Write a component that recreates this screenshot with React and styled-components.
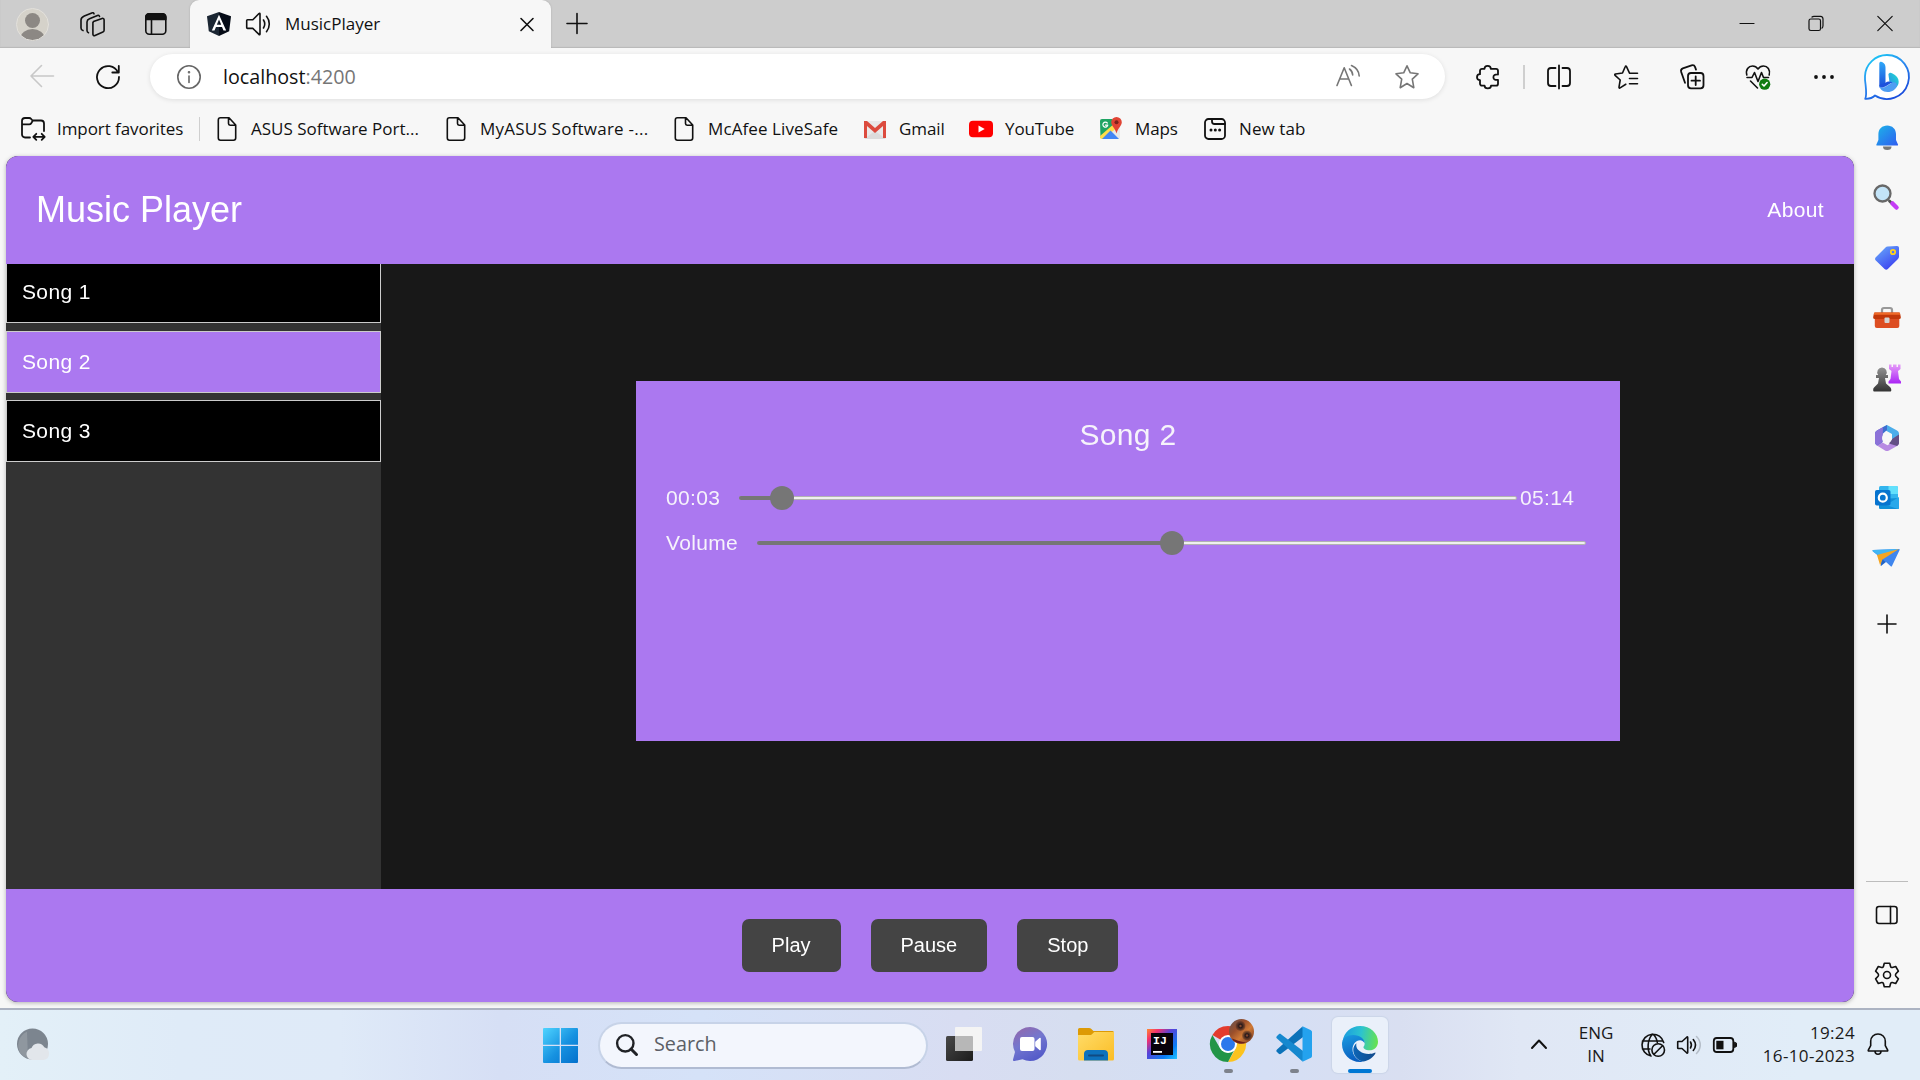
import React from "react";
import styled, { createGlobalStyle } from "styled-components";

const GlobalStyle = createGlobalStyle`
  * { box-sizing: border-box; }
  body { margin: 0; background: #f7f7f7; overflow: hidden; }
`;

const ui = `"Open Sans", "Noto Sans", sans-serif`;
const web = `"Liberation Sans", Arial, sans-serif`;
const violet = "#ab78f0";

const Screen = styled.div`
  display: flex;
  flex-direction: column;
  width: 1920px;
  height: 1080px;
  background: #f7f7f7;
  font-family: ${ui};
  font-size: 17px;
  color: #111;
  overflow: hidden;
`;

const Icon = styled.svg`
  display: block;
  flex: none;
  width: ${(p) => p.$w || 24}px;
  height: ${(p) => p.$h || p.$w || 24}px;
  margin-left: ${(p) => p.$ml || 0}px;
  fill: none;
  stroke: ${(p) => p.$color || "#111"};
  stroke-width: ${(p) => p.$sw || 1.6};
  stroke-linecap: round;
  stroke-linejoin: round;
  overflow: visible;
`;

/* ---------- title bar ---------- */
const TitleBar = styled.header`
  display: flex;
  align-items: center;
  height: 48px;
  flex: none;
  padding-left: 16px;
  background: #cdcdcd;
  box-shadow: inset 0 -1px 1px #b8b8b8;
`;
const Tab = styled.div`
  display: flex;
  align-items: center;
  align-self: stretch;
  width: 361px;
  margin-left: 22px;
  padding: 0 16px 0 17px;
  background: #f7f7f7;
  border-radius: 9px 9px 0 0;
  box-shadow: 0 0 2px #a8a8a8;
  clip-path: inset(0 -3px 0 -3px);
`;
const TabTitle = styled.span`
  flex: 1;
  margin-left: 15px;
  padding-bottom: 2px;
`;
const WindowControls = styled.div`
  display: flex;
  align-items: center;
  gap: 53px;
  margin-left: auto;
  padding-right: 27px;
`;

/* ---------- toolbar ---------- */
const Toolbar = styled.div`
  display: flex;
  align-items: center;
  height: 57px;
  flex: none;
  padding-left: 30px;
`;
const AddressBar = styled.div`
  display: flex;
  align-items: center;
  width: 1295px;
  height: 45px;
  margin-left: 30px;
  padding: 0 26px 0 27px;
  border-radius: 23px;
  background: #fff;
  box-shadow: 0 1px 5px rgba(0, 0, 0, 0.1);
`;
const Url = styled.span`
  flex: 1;
  margin-left: 22px;
  padding-bottom: 1px;
  font-size: 19.7px;
  color: #111;
  & > span { color: #767676; }
`;
const Divider = styled.span`
  width: ${(p) => p.$w || 1}px;
  height: 24px;
  margin-left: ${(p) => p.$ml || 0}px;
  background: #cfcfcf;
`;
const BingSlot = styled.div`
  display: flex;
  margin-left: 28px;
`;

/* ---------- favourites ---------- */
const Favorites = styled.nav`
  display: flex;
  align-items: center;
  height: 48px;
  padding: 0 0 0 21px;
`;
const Favorite = styled.div`
  display: flex;
  align-items: center;
  width: ${(p) => p.$w}px;
  padding-left: ${(p) => p.$pl ?? 15}px;
`;
const FavoriteLabel = styled.span`
  margin-left: 12px;
  padding-bottom: 2px;
  white-space: nowrap;
  letter-spacing: ${(p) => p.$ls || 0}px;
`;

/* ---------- layout ---------- */
const Split = styled.div`
  display: flex;
  flex: none;
  height: 903px;
`;
const LeftColumn = styled.div`
  width: 1854px;
  flex: none;
`;

/* ---------- music app ---------- */
const Page = styled.main`
  display: flex;
  flex-direction: column;
  width: 1848px;
  height: 846px;
  margin: 3px 0 0 6px;
  border-radius: 12px;
  overflow: hidden;
  background: #181818;
  font-family: ${web};
  font-size: 21px;
  letter-spacing: 0.35px;
  color: #fff;
`;
const PageShell = styled.div`
  filter: drop-shadow(0 1px 2px rgba(0, 0, 0, 0.28));
`;
const PageHeader = styled.div`
  display: flex;
  align-items: center;
  justify-content: space-between;
  height: 108px;
  flex: none;
  padding: 0 30px;
  background: ${violet};
`;
const Brand = styled.h1`
  margin: 0;
  font-size: 36px;
  line-height: 42px;
  font-weight: 400;
  letter-spacing: 0;
`;
const Body = styled.div`
  display: flex;
  height: 625px;
  flex: none;
`;
const SongList = styled.div`
  display: flex;
  flex-direction: column;
  width: 375px;
  background: #333;
`;
const Song = styled.div`
  display: flex;
  align-items: center;
  height: ${(p) => (p.$clipped ? 59 : 62)}px;
  margin-bottom: ${(p) => (p.$clipped ? 8 : 7)}px;
  padding: 0 15px ${(p) => (p.$clipped ? 3 : 0)}px;
  border: 1px solid #ccc;
  border-top-width: ${(p) => (p.$clipped ? 0 : 1)}px;
  background: ${(p) => (p.$active ? violet : "#000")};
  line-height: 24px;
`;
const Stage = styled.div`
  display: flex;
  flex: 1;
  padding: 117px 234px 0 255px;
`;
const Card = styled.section`
  display: flex;
  flex-direction: column;
  width: 984px;
  height: 360px;
  padding: 30px 34px 0 30px;
  background: ${violet};
  color: #f6f3fb;
`;
const NowPlaying = styled.h2`
  margin: 0 -4px 0 0;
  height: 48px;
  line-height: 48px;
  text-align: center;
  font-size: 30px;
  font-weight: 400;
`;
const SliderRow = styled.div`
  display: flex;
  align-items: center;
  height: 45px;
  margin-top: ${(p) => p.$mt || 0}px;
`;
const RowLabel = styled.span`
  width: ${(p) => p.$w}px;
  flex: none;
`;
const Track = styled.div`
  position: relative;
  width: ${(p) => p.$w}px;
  height: 4px;
  border: 1px solid #b2b2b2;
  border-radius: 2px;
  background: #efefef;
`;
const Filled = styled.div`
  width: ${(p) => p.$at}px;
  height: 4px;
  margin: -1px;
  border-radius: 2px 0 0 2px;
  background: #767676;
`;
const Thumb = styled.div`
  position: absolute;
  top: -11px;
  left: ${(p) => p.$at - 13}px;
  width: 24px;
  height: 24px;
  border-radius: 50%;
  background: #767676;
`;
const TotalTime = styled.span`
  margin-left: 3px;
`;
const Controls = styled.div`
  display: flex;
  align-items: flex-start;
  justify-content: center;
  gap: 30px;
  flex: 1;
  padding-top: 30px;
  background: ${violet};
`;
const Control = styled.button`
  height: 53px;
  padding: 0 30px;
  border: 0;
  border-radius: 7px;
  background: #444;
  color: #fff;
  font: 20px ${web};
`;

/* ---------- browser side panel ---------- */
const SidePanel = styled.aside`
  display: flex;
  flex-direction: column;
  width: 66px;
  height: 900px;
  align-items: center;
`;
const SideCell = styled.div`
  display: flex;
  align-items: center;
  justify-content: center;
  width: 66px;
  height: ${(p) => p.$h || 60}px;
  padding: ${(p) => p.$pad || "0"};
  flex: none;
`;
const SideRule = styled.div`
  width: 42px;
  height: 1px;
  margin: auto 0 3px;
  background: #bdbdbd;
`;

/* ---------- taskbar ---------- */
const Taskbar = styled.footer`
  display: flex;
  align-items: center;
  height: 72px;
  flex: none;
  border-top: 2px solid #acb3c2;
  padding-left: 16px;
  background: linear-gradient(90deg, #e3f0f8 0, #dfebf8 180px, #dfeaf8 340px, #d6dff5 500px, #d5e2f8 700px, #d8ddf2 960px, #d6def0 1080px, #d4dff6 1230px, #d9dff1 1400px, #e0e7f5 1520px, #e1edf8 1800px);
  color: #1a1a1a;
`;
const StartCell = styled.div`
  display: flex;
  justify-content: center;
  width: 66px;
  margin-left: 477px;
`;
const SearchBox = styled.div`
  display: flex;
  align-items: center;
  width: 330px;
  height: 47px;
  margin-left: 5px;
  padding-left: 16px;
  border: 2px solid #c7d3e8;
  border-bottom-color: #b0bbd2;
  border-radius: 24px;
  background: #f3f6fd;
  color: #5c5f66;
  font-size: 19.8px;
`;
const SearchLabel = styled.span`
  margin-left: 16px;
  padding-bottom: 3px;
`;
const Apps = styled.div`
  display: flex;
  margin-left: 3px;
`;
const AppCell = styled.div`
  display: flex;
  flex-direction: column;
  align-items: center;
  width: 56px;
  height: 56px;
  margin: 0 5px;
  padding-top: 9px;
  border-radius: 6px;
  background: ${(p) => (p.$active ? "#eaf0fa" : "transparent")};
  box-shadow: ${(p) => (p.$active ? "0 0 1px 1px #cbd5e8" : "none")};
`;
const Running = styled.span`
  width: ${(p) => (p.$active ? 24 : 9)}px;
  height: 5px;
  margin-top: 7px;
  border-radius: 3px;
  background: ${(p) => (p.$active ? "#0078d4" : "#7d828c")};
`;
const Tray = styled.div`
  display: flex;
  align-items: center;
  margin-left: auto;
  padding-right: 31px;
`;
const TwoLines = styled.div`
  width: ${(p) => p.$w}px;
  margin-left: ${(p) => p.$ml}px;
  padding-bottom: 2px;
  text-align: ${(p) => p.$align};
  letter-spacing: ${(p) => p.$ls || 0}px;
  line-height: 23px;
  white-space: nowrap;
`;

const Doc = () => (
  <Icon viewBox="0 0 24 24">
    <path d="M5.500.8H14l6.700 7.200V21a2.200 2.200 0 0 1-2.200 2.200h-13A2.200 2.200 0 0 1 3.300 21V3A2.200 2.200 0 0 1 5.500.8zM13.500 1v5.600a1.600 1.600 0 0 0 1.600 1.600h5.400" />
  </Icon>
);

const starPath = "M12 .8l3.300 7 7.700 1-5.700 5.300 1.500 8.600L12 18.500l-6.800 4.200 1.500-8.600L1 8.800l7.700-1z";

function BrowserTop() {
  return (
    <>
      <TitleBar>
        <Icon $w={33} viewBox="0 0 33 33" stroke="none">
          <clipPath id="face"><circle cx="16.500" cy="16.500" r="16" /></clipPath>
          <g clipPath="url(#face)" stroke="none">
            <rect width="33" height="33" fill="#d5d2ca" />
            <circle cx="16.500" cy="12.500" r="7.500" fill="#8c8884" />
            <ellipse cx="16.500" cy="30" rx="12" ry="9" fill="#8c8884" />
          </g>
          <circle cx="16.500" cy="16.500" r="16" stroke="#e3e1dc" strokeWidth="1" />
        </Icon>
        <Icon $ml={31} viewBox="0 0 24 24">
          <path d="M13.500 9.600l8.600-3.200a1.500 1.500 0 0 1 2 1.400v10.400a2 2 0 0 1-1.200 1.800l-7.900 3.600a1.500 1.500 0 0 1-2.100-1.400V11.800a2.400 2.400 0 0 1 .6-2.200z" />
          <path d="M19.500 4.500c-.2-1-1-1.500-2-1.100l-8 3.400C7.800 7.500 7 8.600 7 10v8.500c0 1.200.5 1.800 1.500 2.200M14 1.800c-.4-1-1.200-1.300-2.200-.9L4.300 4C2.200 4.900 1 6 1 8v8c0 1.300.6 2.200 2 2.600" />
        </Icon>
        <Icon $ml={40} viewBox="0 0 24 24">
          <rect x="1.800" y="1.800" width="20" height="20.500" rx="3.500" />
          <path d="M1.800 7.500V5a3.300 3.300 0 0 1 3.400-3.300h13.200A3.300 3.300 0 0 1 21.800 5v2.500zM7.500 8v14" fill="#111" />
        </Icon>
        <Tab>
          <Icon viewBox="0 0 24 24">
            <g stroke="none">
              <path d="M12 0L0 4.200l1.800 15L12 24z" fill="#1b2633" />
              <path d="M12 0l12 4.200-1.800 15L12 24z" fill="#060c17" />
              <path d="M12 2.700L4.800 18.500h2.700L9 14.900h6l1.500 3.600h2.700zm0 4.900l2.200 5.200H9.800z" fill="#fff" fillRule="evenodd" />
            </g>
          </Icon>
          <Icon $ml={15} viewBox="0 0 24 24">
            <path d="M1.500 7.800h5.300L13 1.500c.5-.4 1-.2 1 .4V22c0 .7-.6.900-1 .4l-6.200-6H1.500a.8.8 0 0 1-.8-.8v-7a.8.8 0 0 1 .8-.8zM17.500 8c1.500 2.400 1.500 5.600 0 8M20.500 4.300c3.700 4.500 3.700 11 0 15.400" />
          </Icon>
          <TabTitle>MusicPlayer</TabTitle>
          <Icon $w={16} viewBox="0 0 16 16"><path d="M2 2.500l12 12M14 2.500l-12 12" /></Icon>
        </Tab>
        <Icon $ml={14} viewBox="0 0 24 24"><path d="M2 11.500h20M12 1.500v20" /></Icon>
        <WindowControls>
          <Icon $w={16} $sw={1.2} viewBox="0 0 16 16"><path d="M1 7.500h14" /></Icon>
          <Icon $w={16} $sw={1.2} viewBox="0 0 16 16">
            <rect x="1" y="3" width="11.500" height="11.500" rx="1.800" />
            <path d="M4 1C4.500.5 5 .3 6 .3h6.500A2.700 2.700 0 0 1 15 3V9.500c0 1.500-.3 2-1 2.600" />
          </Icon>
          <Icon $w={16} $sw={1.2} viewBox="0 0 16 16"><path d="M.8.300l14.400 14.400M15.200.300L.8 14.700" /></Icon>
        </WindowControls>
      </TitleBar>
      <Toolbar>
        <Icon $color="#c8c8c8" viewBox="0 0 24 24"><path d="M23.500 11H1M11.500.500L1 11l10.500 10.500" /></Icon>
        <Icon $ml={42} $sw={1.8} viewBox="0 0 24 24"><path d="M22.800 1v6.500h-6.500M22 7.500A11 11 0 1 0 23 12" /></Icon>
        <AddressBar>
          <Icon $color="#666" viewBox="0 0 24 24">
            <circle cx="12" cy="12" r="11.200" /><path d="M12 11v6.500" /><circle cx="12" cy="7.200" r=".5" fill="#666" />
          </Icon>
          <Url>localhost<span>:4200</span></Url>
          <Icon $color="#767676" viewBox="0 0 24 24">
            <path d="M1 20.500L8.200 2.800 15.400 20.500M3.600 14h9.200M13.500 4c2 1.500 3 3.500 3.200 6M15.500.500c4.500 2 7.500 5.500 7.700 10.500" />
          </Icon>
          <Icon $ml={35} $color="#767676" viewBox="0 0 24 24"><path d={starPath} /></Icon>
        </AddressBar>
        <Icon $ml={31} $sw={1.8} viewBox="0 0 24 24">
          <path d="M8.500 3.800C8.500 2 9.800.9 11.600.9s3.200 1.100 3.200 2.900H20a2 2 0 0 1 2 2V9.500c-3.200-.2-4.600.6-4.600 2.700s1.500 2.900 4.600 2.700v3.800a2 2 0 0 1-2 2h-5c0 1.500-1.200 2.600-3.200 2.600s-3.200-1.100-3.200-2.600H6a2 2 0 0 1-2-2v-3.500c-1.900 0-3-1.200-3-3s1.100-3 3-3V5.800a2 2 0 0 1 2-2z" />
        </Icon>
        <Divider $ml={23} $w={2} />
        <Icon $ml={22} $sw={1.8} viewBox="0 0 24 24">
          <path d="M8.500 3H4a3 3 0 0 0-3 3v12a3 3 0 0 0 3 3h4.500M15.500 3H20a3 3 0 0 1 3 3v12a3 3 0 0 1-3 3h-4.500M12 .500v23" />
        </Icon>
        <Icon $ml={43} viewBox="0 0 24 24">
          <path d="M15.500 8.200l-3-6.500c-.3-.8-1-.8-1.300 0L8.500 8 1.500 9c-.8.100-1 .8-.4 1.300L6.200 15l-1.200 7.200c-.1.800.5 1.100 1.100.7l5.700-3.600M15.500 8.300h8M15.500 13.500h8M15.500 18.800h8" />
        </Icon>
        <Icon $ml={42} $sw={1.8} viewBox="0 0 24 24">
          <rect x="8" y="8" width="15.500" height="15.300" rx="3" />
          <path d="M15.700 11.500v8.500M11.500 15.700H20M5 17.800L1.200 7C.7 5.300 1.200 4 2.800 3.400l8.800-3c1.500-.5 2.800 0 3.400 1.500l1 2.700" />
        </Icon>
        <Icon $ml={42} viewBox="0 0 24 24">
          <path d="M.8 10C-.6 4.800 2.500 1 6.500 1c2.500 0 4.300 1.200 5.500 3 1.200-1.800 3-3 5.500-3 4 0 7.100 3.800 5.700 9M1 12.500h5l2.500-5 3.500 9 3.500-9 2 5h5M4.500 16l7 7" />
          <circle cx="18.700" cy="19.200" r="5.600" fill="#107c10" stroke="none" />
          <path d="M16.300 19.300l1.700 1.700 3.100-3.500" stroke="#fff" />
        </Icon>
        <Icon $ml={42} viewBox="0 0 24 24">
          <g fill="#111" stroke="none"><circle cx="4" cy="12" r="1.900" /><circle cx="12" cy="12" r="1.900" /><circle cx="20" cy="12" r="1.900" /></g>
        </Icon>
        <BingSlot>
          <Icon $w={46} viewBox="0 0 46 46">
            <defs>
              <linearGradient id="bing" x1="0" y1="0" x2=".6" y2="1"><stop stopColor="#18d5f5" /><stop offset=".5" stopColor="#2a8cf0" /><stop offset="1" stopColor="#1a4fdd" /></linearGradient>
              <linearGradient id="bingb" x1="0" y1="0" x2="0" y2="1"><stop stopColor="#2fa8f8" /><stop offset="1" stopColor="#1a4ad8" /></linearGradient>
              <linearGradient id="bingc" x1="1" y1="0" x2="0" y2="1"><stop stopColor="#1fe0d0" /><stop offset="1" stopColor="#2c83ea" /></linearGradient>
            </defs>
            <path d="M23 1a22 22 0 1 1-12 40.500C8 44.500 5 45 1.200 44.800 3 41 2 35 1.500 30 .8 26 .9 24 1 22A22 22 0 0 1 23 1z" fill="#fff" stroke="url(#bing)" strokeWidth="1.800" />
            <g stroke="none">
              <path d="M25.500 19c.8-.5 1.500-.3 2.500.2 4.500 2 6.700 5 6.700 8.500 0 3-1.700 5.500-4.200 7 .3-3-.8-4.300-3.500-5.500-1-.5-1.300-.9-1.600-1.800L24.500 21c-.2-.8 0-1.500 1-2z" fill="url(#bingc)" />
              <path d="M15.300 9.500c0-1.800 2-2.200 3.600-1 1.800 1.300 2.600 2.600 2.600 5V30l-4.500 3.500c-1 .8-1.700 0-1.700-1.500z" fill="url(#bingb)" />
              <path d="M15.300 31c1 3 4 3 7 1.200l6-3.700c2-1 4.700 0 4.600 3-1 4-4.500 6.500-9.400 6.500-5 0-8-3-8.200-7z" fill="#4e9df2" />
              <path d="M15.300 31c.6 2.500 3.500 3.200 6.500 1.300l6.500-4c-3-1.300-5-1-6.800.5z" fill="#1d50dc" />
            </g>
          </Icon>
        </BingSlot>
      </Toolbar>
    </>
  );
}

function FavoritesBar() {
  return (
    <Favorites>
      <Favorite $w={178} $pl={0}>
        <Icon $sw={1.8} viewBox="0 0 24 24">
          <path d="M9 20.500H4A3 3 0 0 1 1 17.500V4A3 3 0 0 1 4 1h4.200c.8 0 1.500.4 2 1l1.300 1.500H20a3 3 0 0 1 3 3V14M1.200 7.300h7c.8 0 1.500-.3 2-.9l1.500-2.600M12.500 19.800h11M15.300 16.800l-3 3 3 3M20.700 16.800l3 3-3 3" />
        </Icon>
        <FavoriteLabel $ls={-0.07}>Import favorites</FavoriteLabel>
      </Favorite>
      <Divider />
      <Favorite $w={229}><Doc /><FavoriteLabel>ASUS Software Port...</FavoriteLabel></Favorite>
      <Favorite $w={228}><Doc /><FavoriteLabel $ls={0.23}>MyASUS Software -...</FavoriteLabel></Favorite>
      <Favorite $w={191}><Doc /><FavoriteLabel $ls={0.1}>McAfee LiveSafe</FavoriteLabel></Favorite>
      <Favorite $w={106}>
        <Icon viewBox="0 0 24 24">
          <g stroke="none">
            <path d="M1 4h22v17H1z" fill="#e9e9e9" />
            <path d="M12 14L1 22h22z" fill="#dcdcdc" />
            <path d="M1 4h3l8 7 8-7h3v17h-3V9l-8 7-8-7v12H1z" fill="#dc4b3e" />
          </g>
        </Icon>
        <FavoriteLabel $ls={-0.1}>Gmail</FavoriteLabel>
      </Favorite>
      <Favorite $w={130}>
        <Icon viewBox="0 0 24 24">
          <g stroke="none"><rect y="3.800" width="24" height="16.500" rx="4" fill="#f00" /><path d="M9.500 8.500v7l6.200-3.500z" fill="#fff" /></g>
        </Icon>
        <FavoriteLabel $ls={-0.1}>YouTube</FavoriteLabel>
      </Favorite>
      <Favorite $w={104}>
        <Icon viewBox="0 0 24 24">
          <g stroke="none">
            <rect x="1" y="2" width="20" height="20" rx="2" fill="#e8e8e8" />
            <path d="M1 4a2 2 0 0 1 2-2h10l3 7L1.500 21z" fill="#1fa463" />
            <path d="M1 19L16 6l3 4L4 22H3a2 2 0 0 1-2-2z" fill="#ffdd4b" />
            <path d="M3 22l8.500-8.500L20 22z" fill="#4285f4" />
            <path d="M17.500 0a5.300 5.300 0 0 1 5.300 5.300c0 3.700-4 6-5.300 11.200-1.300-5.200-5.300-7.500-5.300-11.200A5.300 5.300 0 0 1 17.500 0z" fill="#e04434" />
            <circle cx="17.500" cy="5.300" r="2" fill="#7b231b" />
          </g>
          <path d="M8.300 6a2.500 2.500 0 1 0 .5 2.200H6.500" stroke="#fff" strokeWidth="1.200" />
        </Icon>
        <FavoriteLabel $ls={-0.1}>Maps</FavoriteLabel>
      </Favorite>
      <Favorite $w={140}>
        <Icon $sw={1.8} viewBox="0 0 24 24">
          <rect x="2" y="2" width="20" height="20" rx="3.500" />
          <path d="M9 2v2.500A2.500 2.500 0 0 0 11.500 7H22" />
          <g fill="#111" stroke="none"><circle cx="8" cy="13" r="1.500" /><circle cx="12.300" cy="13" r="1.500" /><circle cx="16.600" cy="13" r="1.500" /></g>
        </Icon>
        <FavoriteLabel $ls={0.1}>New tab</FavoriteLabel>
      </Favorite>
    </Favorites>
  );
}

function MusicApp() {
  return (
    <PageShell>
      <Page>
        <PageHeader><Brand>Music Player</Brand><span>About</span></PageHeader>
        <Body>
          <SongList>
            <Song $clipped>Song 1</Song>
            <Song $active>Song 2</Song>
            <Song>Song 3</Song>
          </SongList>
          <Stage>
            <Card>
              <NowPlaying>Song 2</NowPlaying>
              <SliderRow $mt={16}>
                <RowLabel $w={73}>00:03</RowLabel>
                <Track $w={778}><Filled $at={43} /><Thumb $at={43} /></Track>
                <TotalTime>05:14</TotalTime>
              </SliderRow>
              <SliderRow>
                <RowLabel $w={91}>Volume</RowLabel>
                <Track $w={829}><Filled $at={415} /><Thumb $at={415} /></Track>
              </SliderRow>
            </Card>
          </Stage>
        </Body>
        <Controls><Control>Play</Control><Control>Pause</Control><Control>Stop</Control></Controls>
      </Page>
    </PageShell>
  );
}

function EdgeSidebar() {
  return (
    <SidePanel>
      <SideCell $h={63} $pad="3px 0 0">
        <Icon $w={26} viewBox="0 0 26 26">
          <defs><linearGradient id="bell" x1="0" y1="0" x2="1" y2="1"><stop stopColor="#1cb5e8" /><stop offset="1" stopColor="#2f5cf0" /></linearGradient></defs>
          <g stroke="none">
            <path d="M9 21.500h8.500a4.200 3.500 0 0 1-8.500 0z" fill="#777" />
            <path d="M13.200.500c5 0 8.800 3.500 8.800 8.500v6l2 4.500c.2.500 0 1-.6 1H3c-.6 0-.8-.5-.6-1l2-4.500V9c0-5 3.800-8.500 8.800-8.500z" fill="url(#bell)" />
          </g>
        </Icon>
      </SideCell>
      <SideCell $pad="0 2px 2px 0">
        <Icon $w={26} viewBox="0 0 26 26">
          <path d="M16.500 17l2.500 2.500" stroke="#555" strokeWidth="3" />
          <path d="M19.500 19.500l4 4" stroke="#c43cf5" strokeWidth="4.500" />
          <circle cx="9.500" cy="9.500" r="8" fill="#c3e4f8" stroke="#686868" strokeWidth="2.300" />
        </Icon>
      </SideCell>
      <SideCell>
        <Icon $w={26} viewBox="0 0 26 26">
          <defs><linearGradient id="tag" x1="0" y1="0" x2=".7" y2="1"><stop stopColor="#6bb0fb" /><stop offset="1" stopColor="#3a3ff0" /></linearGradient></defs>
          <path d="M13.500 1.500L23 1c1.300 0 2 .8 2 2v8.500c0 1-.3 1.700-1 2.400L13.800 24c-1 1-2.200 1-3.200 0L1.800 15.500c-1-1-1-2.200 0-3.200L11.500 2.500c.6-.6 1.200-1 2-1z" fill="url(#tag)" stroke="none" />
          <circle cx="19" cy="7" r="2.200" stroke="#ffd21e" strokeWidth="1.800" />
        </Icon>
      </SideCell>
      <SideCell>
        <Icon $w={28} viewBox="0 0 28 28">
          <path d="M9 9V6c0-1.500.8-2 2-2h6c1.200 0 2 .5 2 2v3" stroke="#999" strokeWidth="2.200" />
          <g stroke="none">
            <rect x="1.800" y="13" width="24.500" height="11" rx="2" fill="#dd4e22" />
            <path d="M2.500 8.500h23c1 0 1.500.5 1.700 1.500l.6 3c.2 1-.3 2-1.500 2H1.700c-1.200 0-1.700-1-1.500-2l.6-3c.2-1 .7-1.500 1.700-1.500z" fill="#c2380a" />
            <path d="M1.200 8.500h25.600l.3 2.200H.9z" fill="#ef6a28" />
            <rect x="11.500" y="13.500" width="5" height="5.500" rx="1" fill="#d4d4d4" />
          </g>
        </Icon>
      </SideCell>
      <SideCell>
        <Icon $w={28} viewBox="0 0 28 28">
          <defs><linearGradient id="pawn" x1="0" y1="0" x2="0" y2="1"><stop stopColor="#929292" /><stop offset="1" stopColor="#333" /></linearGradient><linearGradient id="rook" x1="0" y1="0" x2="0" y2="1"><stop stopColor="#e59cf8" /><stop offset="1" stopColor="#aa24f5" /></linearGradient></defs>
          <g stroke="none">
            <path d="M16 .5h2.500V3H20V.5h3.500V3H25V.5h2.500V5L25 7l1 8 2 2.500V19.500H15.500V17.500l2-2.500 1-8L16 5z" fill="url(#rook)" />
            <path d="M9 3.500a4.700 4.700 0 0 1 3.800 7.500H15v3h-3l1 5.500 4 3.500c1 .8 1.300 2 1.300 3.200 0 .8-.5 1.300-1.300 1.300H1.500c-.8 0-1.300-.5-1.300-1.300 0-1.500.3-2.400 1.300-3.200L5 19.500 6 14H3v-3h2.200A4.700 4.700 0 0 1 9 3.500z" fill="url(#pawn)" />
          </g>
        </Icon>
      </SideCell>
      <SideCell>
        <Icon $w={26} viewBox="0 0 26 26">
          <g stroke="none">
            <path d="M9 2l4-2 10 5.500c1.500.8 2 2 2 3.500v9l-7-4.500V9L9 4z" fill="#4badea" />
            <path d="M13 0L3 5.500C1.500 6.500 1 7.500 1 9v8c0 1.700.7 2.700 2 3.500l1.500.5L8.500 17V9L13 5z" fill="#3f6dcf" />
            <path d="M9 2L3 5.500C1.500 6.500 1 7.500 1 9v8c0 1.700.7 2.700 2 3.500L8.500 17z" fill="#8c72d8" />
            <path d="M3 20.500l5.500-3 5 2.800 8-5L25 18c-.2 1.300-1 2.300-2 3l-8 4.500c-1.500.8-2.700.8-4 0z" fill="#b78be2" />
            <path d="M18 14l7-4.500V18c0 1-.6 2.200-2 3l-8-2.500z" fill="#644f86" />
            <circle cx="13" cy="13" r="5" fill="#f7f7f7" />
          </g>
        </Icon>
      </SideCell>
      <SideCell>
        <Icon $w={26} viewBox="0 0 26 26">
          <g stroke="none">
            <rect x="5" y="1" width="19" height="15" rx="1.500" fill="#33b5ee" />
            <path d="M14.500 1H22.500A1.500 1.500 0 0 1 24 2.500V9h-9.500z" fill="#62e0fc" />
            <path d="M5 14l20-1v9.500c0 1-.7 1.500-1.500 1.500h-17C5.500 24 5 23.500 5 22.500z" fill="#1190d8" />
            <path d="M25 12L12 20l12 4c.8-.2 1-.7 1-1.500z" fill="#28a8ea" />
            <rect x="1" y="5" width="15.500" height="15.500" rx="1.800" fill="#0774cf" />
          </g>
          <circle cx="8.800" cy="12.700" r="4" stroke="#fff" strokeWidth="2.200" />
        </Icon>
      </SideCell>
      <SideCell $pad="0 2px 0 0">
        <Icon $w={28} viewBox="0 0 28 28">
          <g stroke="none">
            <path d="M1 6L27 5c.5 0 .8.500.6 1L20 22c-.3.700-.8.700-1.300.3L14 18l-5 4V14L1 7.500c-.6-.5-.6-1.400 0-1.500z" fill="#3f86ee" />
            <path d="M1 6L27 5 7.500 12 1 7.500c-.6-.5-.6-1.400 0-1.500z" fill="#42b6f3" />
            <path d="M27 5L5 11l3.200 10.500 2.300-6z" fill="#f4a522" />
            <path d="M10.500 15.500L8.500 22l5-4z" fill="#2463c2" />
          </g>
        </Icon>
      </SideCell>
      <SideCell $h={70} $pad="1px 1px 0 0"><Icon viewBox="0 0 24 24"><path d="M3 12h18M12 3v18" /></Icon></SideCell>
      <SideRule />
      <SideCell>
        <Icon viewBox="0 0 24 24"><rect x="1.500" y="3.500" width="20.500" height="17" rx="2.500" /><path d="M15.500 3.500v17" /></Icon>
      </SideCell>
      <SideCell>
        <Icon $w={26} viewBox="0 0 26 26">
          <circle cx="13" cy="13" r="3.500" />
          <path d="M10.300 1.200h5.400l.9 3.300c.2.700 1 1.100 1.700.9l3.400-.9 2.700 4.600-2.500 2.600c-.5.700-.5 1.900 0 2.600l2.500 2.600-2.700 4.600-3.400-.9c-.7-.2-1.500.2-1.700.9l-.9 3.300h-5.400l-.9-3.300c-.2-.7-1-1.100-1.700-.9l-3.400.9-2.700-4.600 2.500-2.600c.5-.7.500-1.900 0-2.600L1.600 9.100l2.700-4.600 3.400.9c.7.200 1.500-.2 1.700-.9z" />
        </Icon>
      </SideCell>
    </SidePanel>
  );
}

function WindowsTaskbar() {
  return (
    <Taskbar>
      <Icon $w={34} viewBox="0 0 34 34">
        <g stroke="none">
          <circle cx="16.500" cy="16" r="15.500" fill="#7c858f" />
          <path d="M11 3.500a15.500 15.500 0 0 0-7 21 15.500 15.500 0 0 0 8 6z" fill="#8f979f" />
          <path d="M16 32a6 6 0 0 1-.5-11.900 7 7 0 0 1 12.800-.8A6.500 6.500 0 0 1 27.500 32z" fill="#e2e6eb" />
        </g>
      </Icon>
      <StartCell>
        <Icon $w={35} viewBox="0 0 35 35">
          <defs><linearGradient id="win" gradientUnits="userSpaceOnUse" x1="0" y1="0" x2="35" y2="35"><stop stopColor="#4fd4ff" /><stop offset=".55" stopColor="#1691e0" /><stop offset="1" stopColor="#0370cc" /></linearGradient></defs>
          <path d="M1 0h15.700v16.700H0V1a1 1 0 0 1 1-1zM18 0h16a1 1 0 0 1 1 1v15.700H18zM0 18h16.700v17H1a1 1 0 0 1-1-1zM18 18h17v16a1 1 0 0 1-1 1H18z" fill="url(#win)" stroke="none" />
        </Icon>
      </StartCell>
      <SearchBox>
        <Icon $w={22} $sw={2.4} $color="#202226" viewBox="0 0 22 22"><circle cx="9.300" cy="9.300" r="8.200" /><path d="M15 15l5.500 5.500" strokeWidth="3" /></Icon>
        <SearchLabel>Search</SearchLabel>
      </SearchBox>
      <Apps>
        <AppCell>
          <Icon $w={36} viewBox="0 0 36 36">
            <defs><linearGradient id="tv" x1="0" y1="0" x2="1" y2="1"><stop stopColor="#484848" /><stop offset="1" stopColor="#1c1c1c" /></linearGradient></defs>
            <g stroke="none"><rect x="0" y="10" width="27" height="25" rx="1.500" fill="url(#tv)" /><rect x="9" y="1" width="27" height="24" rx="1" fill="#f4f4f4" /><path d="M9 10h17a1 1 0 0 1 1 1v14H10a1 1 0 0 1-1-1z" fill="#b7b7b7" /></g>
          </Icon>
        </AppCell>
        <AppCell>
          <Icon $w={36} viewBox="0 0 36 36">
            <defs><linearGradient id="chat" x1=".2" y1="0" x2=".7" y2="1"><stop stopColor="#9168ad" /><stop offset=".45" stopColor="#7377cf" /><stop offset="1" stopColor="#5158c8" /></linearGradient></defs>
            <g stroke="none"><path d="M18 1a17 17 0 1 1-7.500 32.200L2.500 35c-1.200.2-1.800-.5-1.400-1.700L3 26A17 17 0 0 1 18 1z" fill="url(#chat)" /><rect x="8" y="11" width="14.500" height="14" rx="2" fill="#fff" /><path d="M24 16l4-3.500v11L24 20z" fill="#fff" stroke="#fff" /></g>
          </Icon>
        </AppCell>
        <AppCell>
          <Icon $w={36} viewBox="0 0 36 36">
            <defs><linearGradient id="fold" x1="0" y1="0" x2="1" y2="1"><stop stopColor="#ffdc69" /><stop offset="1" stopColor="#fbbd25" /></linearGradient></defs>
            <g stroke="none">
              <path d="M0 3.500A1.500 1.500 0 0 1 1.500 2H11c1 0 1.700.3 2.400 1l2 2H34.500A1.500 1.500 0 0 1 36 6.500V12H0z" fill="#dd9a05" />
              <path d="M0 9h12c1 0 1.500-.3 2.200-1l2-2H36v27a1.500 1.500 0 0 1-1.500 1.500h-33A1.500 1.500 0 0 1 0 33z" fill="url(#fold)" />
              <path d="M6 34.500V28c0-2.500 1.500-4 4-4h16c2.500 0 4 1.500 4 4v6.500z" fill="#0e72bd" />
              <rect x="10" y="28.500" width="16" height="2" rx="1" fill="#114a82" />
            </g>
          </Icon>
        </AppCell>
        <AppCell>
          <Icon $w={36} viewBox="0 0 36 36">
            <defs><linearGradient id="ij" x1="0" y1="0" x2="1" y2="1"><stop stopColor="#ff8a30" /><stop offset=".2" stopColor="#f4306c" /><stop offset=".42" stopColor="#5942d8" /><stop offset=".75" stopColor="#087cf5" /><stop offset="1" stopColor="#20c5ff" /></linearGradient></defs>
            <g stroke="none"><rect x="3" y="3" width="30" height="30" fill="url(#ij)" /><rect x="7" y="7" width="22" height="22" fill="#08020b" /><rect x="9" y="25" width="9" height="1.800" fill="#fff" />
              <text x="9" y="18" fill="#fff" fontFamily="Liberation Mono, monospace" fontWeight="700" fontSize="11.500">IJ</text></g>
          </Icon>
        </AppCell>
        <AppCell>
          <Icon $w={36} viewBox="0 0 36 36">
            <defs>
              <linearGradient id="pic" x1="0" y1="0" x2="1" y2="1"><stop stopColor="#5d5557" /><stop offset=".35" stopColor="#9a4e2a" /><stop offset=".6" stopColor="#d07a35" /><stop offset="1" stopColor="#6a3020" /></linearGradient>
              <radialGradient id="eye"><stop stopColor="#a85a34" /><stop offset=".35" stopColor="#2a1a1a" /><stop offset="1" stopColor="#3a2420" stopOpacity=".3" /></radialGradient>
            </defs>
            <g stroke="none">
              <path d="M18 18L2.400 9A18 18 0 0 1 33.600 9z" fill="#e33b2e" />
              <path d="M18 9h15.600A18 18 0 0 1 18 36l8-14z" fill="#fcc31e" />
              <path d="M2.400 9l7.800 13.500c3 4 9 5 13.500 2.600L18 36A18 18 0 0 1 2.400 9z" fill="#229547" />
              <circle cx="18" cy="18" r="9" fill="#fff" /><circle cx="18" cy="18" r="7" fill="#2b78ec" />
              <circle cx="31.500" cy="5.500" r="12.500" fill="url(#pic)" />
              <circle cx="30.500" cy="0" r="5" fill="url(#eye)" /><circle cx="37" cy="9.500" r="5" fill="url(#eye)" />
              <path d="M22 12.500c2 5 9 6 14 4-5-1-11-2.500-14-4z" fill="#6e2118" />
            </g>
          </Icon>
          <Running />
        </AppCell>
        <AppCell>
          <Icon $w={36} viewBox="0 0 36 36">
            <g stroke="none">
              <path d="M26.500.500L1 23.500c-.9.800-.9 1.800 0 2.600l1.800 1.600c.7.600 1.500.6 2.200.1L29 9.500z" fill="#0b72b9" />
              <path d="M26.500 35.500L1 12.500c-.9-.8-.9-1.800 0-2.600l1.800-1.600c.7-.6 1.500-.6 2.200-.1L29 26.500z" fill="#1588cf" />
              <path d="M26.500.200l8 3.800c1 .5 1.500 1.200 1.500 2.300v23.400c0 1.100-.5 1.800-1.500 2.300l-8 3.800z" fill="#24a2ee" />
            </g>
          </Icon>
          <Running />
        </AppCell>
        <AppCell $active>
          <Icon $w={36} viewBox="0 0 24 24">
            <defs>
              <linearGradient id="e1" x1="0" y1=".5" x2="1" y2=".6"><stop stopColor="#1b9de0" /><stop offset=".5" stopColor="#2cc3cf" /><stop offset="1" stopColor="#68e34c" /></linearGradient>
              <linearGradient id="e2" x1="0" y1="0" x2=".3" y2="1"><stop stopColor="#1a9be0" /><stop offset="1" stopColor="#0a5fc0" /></linearGradient>
              <linearGradient id="e3" x1="0" y1="0" x2="1" y2="0"><stop stopColor="#0d65b6" /><stop offset="1" stopColor="#114a8b" /></linearGradient>
            </defs>
            <g stroke="none">
              <path d="M.4 10C1.300 4.300 6 0 12 0c7 0 12 5 12 10.500 0 3.500-2.500 5.700-5.700 5.700-2.500 0-4-1-4-2 0-.6.800-1 .8-2.500 0-2.200-2-3.700-5-4C6 7 2.500 8 .4 10z" fill="url(#e1)" />
              <path d="M0 12c0-4 3.500-6 7.500-6 4.500 0 7.500 2.500 7.600 5.500-.8-1.300-2-2-3-2C9 9.500 7 12.500 7 15.500c0 4 3 7.500 7 8.300-1 .2-1.500.2-2 .2C5.300 24 0 18.700 0 12z" fill="url(#e2)" />
              <path d="M9.700 11.500c-1.400 1-2.200 2.700-2.200 4.500 0 4 3.300 7.400 7 7.700 3.500-.7 6.500-3 7.800-5.500.2-.4-.1-.6-.5-.4-1.200.5-2.500.8-4 .8-4.500 0-8.300-2.700-8.300-5.600 0-.6 0-1 .2-1.500z" fill="url(#e3)" />
            </g>
          </Icon>
          <Running $active />
        </AppCell>
      </Apps>
      <Tray>
        <Icon $w={18} $sw={2} viewBox="0 0 18 18"><path d="M2 12l7-7.500L16 12" /></Icon>
        <TwoLines $w={50} $ml={23} $align="center">ENG<br />IN</TwoLines>
        <Icon $ml={20} viewBox="0 0 24 24">
          <path d="M10 23A11 11 0 1 1 22.700 9.500M1.500 8h20.500M1.500 16H9M9.500 22.500C6 17 6 6.500 11.800 1 15 4 16 6.500 16.300 9.500" />
          <circle cx="17.200" cy="17" r="6.300" /><path d="M13 21.300l8.500-8.500" />
        </Icon>
        <Icon $ml={12} viewBox="0 0 24 24">
          <path d="M1.300 8.500H5l5-4.500c.4-.3.700-.1.700.4v15.200c0 .5-.4.700-.8.400L5 15.500H1.300a.6.600 0 0 1-.6-.6V9.100a.6.600 0 0 1 .6-.6zM13.500 9c1.200 2 1.200 4 0 6M16.300 6.500c2.800 3.500 2.800 7.500 0 11" />
          <path d="M19.500 3.500c5 5 5 12 0 17" stroke="#b6bfca" />
        </Icon>
        <Icon $ml={12} viewBox="0 0 24 24">
          <rect x=".8" y="5" width="19.500" height="14" rx="3" strokeWidth="1.800" /><rect x="3.300" y="7.800" width="7.200" height="8.500" fill="#111" stroke="none" /><path d="M21.300 9.500v5l2.200-1v-3z" fill="#111" strokeWidth="1" />
        </Icon>
        <TwoLines $w={101} $ml={17} $align="right" $ls={0.35}>19:24<br />16-10-2023</TwoLines>
        <Icon $w={22} $ml={12} viewBox="0 0 22 22">
          <path d="M11 0c-4 0-7.300 3-7.300 7.200v4.500L1.300 16.200c-.2.500 0 .8.500.8h18.400c.5 0 .7-.3.500-.8l-2.400-4.500V7.200C18.300 3 15 0 11 0zM8 17.200c.2 4 5.800 4 6 0" />
        </Icon>
      </Tray>
    </Taskbar>
  );
}

export default function App() {
  return (
    <Screen>
      <GlobalStyle />
      <BrowserTop />
      <Split>
        <LeftColumn>
          <FavoritesBar />
          <MusicApp />
        </LeftColumn>
        <EdgeSidebar />
      </Split>
      <WindowsTaskbar />
    </Screen>
  );
}
